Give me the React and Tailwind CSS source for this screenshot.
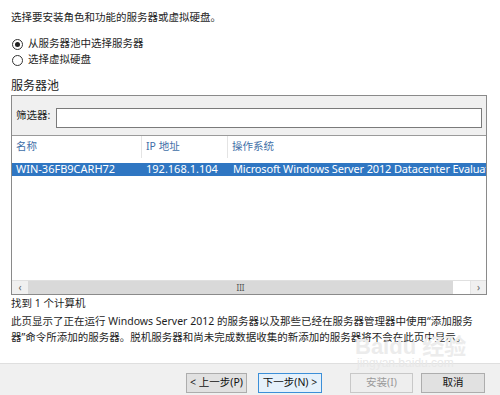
import React from "react";

const font = { fontFamily: '"Noto Sans", "Noto Sans CJK SC", sans-serif' };

function Radio({ checked, label }) {
  return (
    <div className="flex items-center h-[16px] pl-[1px]">
      <div className="w-[11px] h-[11px] rounded-full border border-[#333] bg-white flex items-center justify-center">
        {checked && <div className="w-[5px] h-[5px] rounded-full bg-[#222]" />}
      </div>
      <span className="ml-[5px]">{label}</span>
    </div>
  );
}

function Btn({ children, w, focused, disabled }) {
  return (
    <div
      className={`h-[20px] flex items-center justify-center border ${
        focused ? "border-[#3c8fd8] bg-[#e5f1fb]" : disabled ? "border-[#c8c8c8] bg-[#eeeeee]" : "border-[#adadad] bg-[#e1e1e1]"
      } ${disabled ? "text-[#9a9a9a]" : "text-[#111]"} ${w}`}
    >
      {children}
    </div>
  );
}

export default function App() {
  return (
    <div className="w-[500px] h-[395px] bg-white text-[10.5px] text-[#1e1e1e] flex flex-col overflow-hidden relative" style={font}>
      <div className="flex-1 px-[11px] pt-[9px] flex flex-col">
        <div className="h-[16px] leading-[16px]">选择要安装角色和功能的服务器或虚拟硬盘。</div>
        <div className="mt-[11px] flex flex-col">
          <Radio checked label="从服务器池中选择服务器" />
          <Radio label="选择虚拟硬盘" />
        </div>
        <div className="mt-[10px] h-[16px] leading-[16px] text-[12px] text-[#222]">服务器池</div>
        <div className="mt-[1px] w-[476px] border border-[#8a8a8a] flex flex-col">
          <div className="h-[40px] bg-[#f0f0f0] border-b border-[#9a9a9a] flex items-center pl-[4px] pr-[4px]">
            <span className="w-[40px]">筛选器:</span>
            <div className="mt-[4px] flex-1 h-[20px] border border-[#7a7a7a] bg-white" />
          </div>
          <div className="h-[144px] bg-white flex flex-col overflow-hidden">
            <div className="h-[22px] flex items-center text-[#3f6fa8] whitespace-nowrap">
              <div className="w-[130px] pl-[4px] h-full flex items-center border-r border-[#e4e4e4]">名称</div>
              <div className="w-[86px] pl-[4px] h-full flex items-center border-r border-[#e4e4e4]">IP 地址</div>
              <div className="pl-[4px]">操作系统</div>
            </div>
            <div className="mt-[5px] h-[13px] bg-[#2f76c2] text-white text-[11px] flex items-center whitespace-nowrap overflow-hidden">
              <div className="w-[130px] pl-[4px] shrink-0">WIN-36FB9CARH72</div>
              <div className="w-[86px] pl-[4px] shrink-0">192.168.1.104</div>
              <div className="pl-[5px] shrink-0 tracking-[-0.15px]">Microsoft Windows Server 2012 Datacenter Evaluation</div>
            </div>
          </div>
          <div className="h-[14px] flex items-center bg-[#f0f0f0] border-t border-[#e0e0e0]">
            <div className="w-[16px] h-full flex items-center justify-center text-[#666] text-[10px]">‹</div>
            <div className="w-[425px] h-[13px] bg-[#d9d9d9] flex items-center justify-center text-[#555] text-[8px]">III</div>
            <div className="flex-1 h-full bg-white" />
            <div className="w-[16px] h-full flex items-center justify-center text-[#666] text-[10px] border-l border-[#e4e4e4]">›</div>
          </div>
        </div>
        <div className="h-[16px] leading-[16px]">找到 1 个计算机</div>
        <div className="mt-[2px] leading-[16px] whitespace-nowrap">
          此页显示了正在运行 Windows Server 2012 的服务器以及那些已经在服务器管理器中使用“添加服务
          <br />
          器”命令所添加的服务器。脱机服务器和尚未完成数据收集的新添加的服务器将不会在此页中显示。
        </div>
      </div>
      <div className="h-[32px] bg-[#f0f0f0] border-t border-[#dfdfdf] flex items-start pt-[9px]">
        <div className="ml-[186px] flex">
          <Btn w="w-[61px]">&lt; 上一步(P)</Btn>
          <div className="ml-[11px]"><Btn w="w-[64px]" focused>下一步(N) &gt;</Btn></div>
          <div className="ml-[28px]"><Btn w="w-[63px]" disabled>安装(I)</Btn></div>
          <div className="ml-[8px]"><Btn w="w-[64px]">取消</Btn></div>
        </div>
      </div>
      <div className="absolute left-[355px] top-[333px] text-[22px] font-bold text-[#ececec] leading-none pointer-events-none" style={{ fontFamily: '"Liberation Sans", sans-serif' }}>
        Baidu <span style={{ fontFamily: '"Noto Sans CJK SC", sans-serif' }}>经验</span>
      </div>
      <div className="absolute left-[357px] top-[357px] text-[12px] text-[#e8e8e8] leading-none pointer-events-none" style={{ fontFamily: '"Liberation Sans", sans-serif' }}>
        jingyan.baidu.com
      </div>
    </div>
  );
}
